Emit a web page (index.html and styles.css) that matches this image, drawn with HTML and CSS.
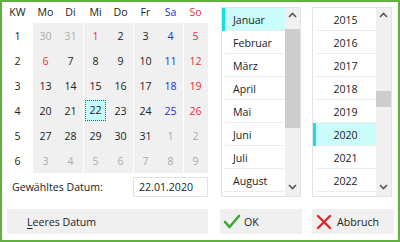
FILE: index.html
```html
<!DOCTYPE html>
<html lang="de">
<head>
<meta charset="utf-8">
<link rel="stylesheet" href="styles.css">
</head>
<body>
<div class="frame">
  <div class="top">
    <div class="calcol">
      <div class="cal">
        <div class="h">KW</div><div class="h">Mo</div><div class="h">Di</div><div class="h">Mi</div><div class="h">Do</div><div class="h">Fr</div><div class="h sa">Sa</div><div class="h so">So</div>

        <div class="kw">1</div><div class="c o">30</div><div class="c o">31</div><div class="c l so">1</div><div class="c">2</div><div class="c l">3</div><div class="c sa">4</div><div class="c l so">5</div>
        <div class="kw">2</div><div class="c so">6</div><div class="c">7</div><div class="c l">8</div><div class="c">9</div><div class="c l">10</div><div class="c sa">11</div><div class="c l so">12</div>
        <div class="kw">3</div><div class="c">13</div><div class="c">14</div><div class="c l">15</div><div class="c">16</div><div class="c l">17</div><div class="c sa">18</div><div class="c l so">19</div>
        <div class="kw">4</div><div class="c">20</div><div class="c">21</div><div class="c l"><span class="sel">22</span></div><div class="c">23</div><div class="c l">24</div><div class="c sa">25</div><div class="c l so">26</div>
        <div class="kw">5</div><div class="c">27</div><div class="c">28</div><div class="c l">29</div><div class="c">30</div><div class="c l">31</div><div class="c o">1</div><div class="c l o">2</div>
        <div class="kw">6</div><div class="c o">3</div><div class="c o">4</div><div class="c l o">5</div><div class="c o">6</div><div class="c l o">7</div><div class="c o">8</div><div class="c l o">9</div>
      </div>
      <div class="chosen">
        <span class="lbl">Gewähltes Datum:</span>
        <span class="inp">22.01.2020</span>
      </div>
    </div>

    <div class="list months">
      <div class="items">
        <div class="it act">Januar</div>
        <div class="it">Februar</div>
        <div class="it">März</div>
        <div class="it">April</div>
        <div class="it">Mai</div>
        <div class="it">Juni</div>
        <div class="it">Juli</div>
        <div class="it">August</div>
      </div>
      <div class="sb">
        <svg class="up" width="9" height="6" viewBox="0 0 9 6"><polyline points="1,5 4.5,1.5 8,5" fill="none" stroke="#555" stroke-width="1.6"/></svg>
        <div class="thumb mthumb"></div>
        <svg class="down" width="9" height="6" viewBox="0 0 9 6"><polyline points="1,1 4.5,4.5 8,1" fill="none" stroke="#555" stroke-width="1.6"/></svg>
      </div>
    </div>

    <div class="list years">
      <div class="items">
        <div class="it">2015</div>
        <div class="it">2016</div>
        <div class="it">2017</div>
        <div class="it">2018</div>
        <div class="it">2019</div>
        <div class="it act">2020</div>
        <div class="it">2021</div>
        <div class="it">2022</div>
      </div>
      <div class="sb">
        <svg class="up" width="9" height="6" viewBox="0 0 9 6"><polyline points="1,5 4.5,1.5 8,5" fill="none" stroke="#555" stroke-width="1.6"/></svg>
        <div class="thumb ythumb"></div>
        <svg class="down" width="9" height="6" viewBox="0 0 9 6"><polyline points="1,1 4.5,4.5 8,1" fill="none" stroke="#555" stroke-width="1.6"/></svg>
      </div>
    </div>
  </div>

  <div class="buttons">
    <div class="btn clear"><span><u>L</u>eeres Datum</span></div>
    <div class="btn ok">
      <svg width="18" height="16" viewBox="0 0 18 16"><polyline points="2,8 6.5,13 16,2" fill="none" stroke="#3fa535" stroke-width="2.6" stroke-linecap="round" stroke-linejoin="round"/></svg>
      <span>OK</span>
    </div>
    <div class="btn cancel">
      <svg width="16" height="16" viewBox="0 0 16 16"><path d="M2 2 L14 14 M14 2 L2 14" stroke="#e0282e" stroke-width="2.4" stroke-linecap="round"/></svg>
      <span>Abbruch</span>
    </div>
  </div>
</div>
</body>
</html>
```

FILE: styles.css
```css
* { box-sizing: border-box; }
html, body { margin: 0; padding: 0; background: #fff; }
body {
  font-family: "Open Sans", "DejaVu Sans", sans-serif;
  font-size: 10.6px;
  color: #222;
}
.frame {
  width: 400px;
  height: 242px;
  border: 2px solid #62b13e;
  overflow: hidden;
}
.top {
  display: flex;
  height: 195px;
}
.calcol {
  width: 206px;
  display: flex;
  flex-direction: column;
}
.cal {
  display: grid;
  grid-template-columns: 31px repeat(7, 25px);
  grid-template-rows: 21px repeat(6, 25px);
}
.h, .kw, .c {
  display: flex;
  align-items: center;
  justify-content: center;
}
.h { padding-bottom: 1px; }
.c { background: #f0f0f0; }
.c.l { box-shadow: inset 1px 0 0 #fff; }
.sa { color: #1f2de0; }
.so { color: #e6303a; }
.o { color: #ababab; }
.sel {
  width: 21px;
  height: 21px;
  margin-top: -1px;
  display: flex;
  align-items: center;
  justify-content: center;
  background: #c4fbfb;
  border: 1px dotted #555;
  color: #222;
}
.chosen {
  display: flex;
  align-items: center;
  justify-content: space-between;
  margin-top: 4px;
  height: 20px;
  padding-left: 10px;
}
.inp {
  width: 75px;
  height: 20px;
  border: 1px solid #e3e3e3;
  padding-left: 5px;
  display: flex;
  align-items: center;
}
.list {
  margin-top: 5px;
  height: 190px;
  width: 80px;
  border: 1px solid #e3e3e3;
  display: flex;
  overflow: hidden;
}
.months { margin-left: 13px; }
.years { margin-left: 11px; }
.items {
  flex: 1;
  display: flex;
  flex-direction: column;
}
.it {
  flex: none;
  height: 23px;
  display: flex;
  align-items: center;
  padding-left: 11px;
  position: relative;
}
.it::after {
  content: "";
  position: absolute;
  left: 3px;
  right: 0;
  bottom: 0;
  height: 1px;
  background: #ececec;
}
.years .it { justify-content: center; padding-left: 2px; }
.it.act {
  background: #cafcfc;
  box-shadow: inset 3px 0 0 #16e0e6;
}
.sb {
  width: 15px;
  background: #f0f0f0;
  display: flex;
  flex-direction: column;
  align-items: center;
}
.sb .up { margin-top: 4px; flex: none; }
.sb .down { margin-top: auto; margin-bottom: 6px; flex: none; }
.thumb { width: 15px; background: #cdcdcd; flex: none; }
.mthumb { height: 99px; margin-top: 11px; }
.ythumb { height: 16px; margin-top: 73px; }
.buttons {
  display: flex;
  margin-top: 12px;
  height: 25px;
}
.btn {
  background: #f0f0f0;
  display: flex;
  align-items: center;
  height: 25px;
}
.clear { margin-left: 5px; width: 201px; padding-left: 20px; }
.ok { margin-left: 12px; width: 82px; padding-left: 3px; gap: 3px; }
.cancel { margin-left: 10px; width: 82px; padding-left: 4px; gap: 5px; }
u { text-decoration-thickness: 1px; text-underline-offset: 2px; }
```
